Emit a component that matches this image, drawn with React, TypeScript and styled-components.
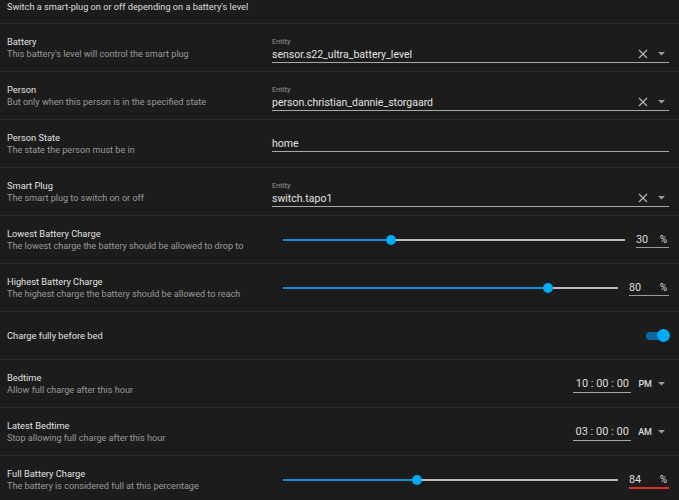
import React from "react";
import styled, { createGlobalStyle } from "styled-components";

const GlobalStyle = createGlobalStyle`
  html, body {
    margin: 0;
    padding: 0;
    background: #1c1c1c;
    font-family: Roboto, "Liberation Sans", sans-serif;
  }
`;

const Page = styled.div`
  width: 679px;
  height: 500px;
  overflow: hidden;
  background: #1c1c1c;
`;

const Header = styled.div`
  height: 23px;
  padding: 0 7px;
  font-size: 9.2px;
  line-height: 13px;
  color: #dcdcdc;
`;

const Row = styled.div`
  display: flex;
  align-items: stretch;
  height: 47px;
  border-top: 1px solid #2d2d2d;
  box-sizing: content-box;
`;

const Info = styled.div`
  width: 265px;
  padding-left: 7px;
  display: flex;
  flex-direction: column;
  justify-content: center;
`;

const Title = styled.div`
  font-size: 9.3px;
  line-height: 13px;
  color: #e1e1e1;
`;

const Desc = styled.div`
  font-size: 9.1px;
  line-height: 13px;
  color: #9a9a9a;
`;

const Control = styled.div<{ $align?: string }>`
  flex: 1;
  padding-right: 10px;
  display: flex;
  align-items: center;
  justify-content: ${(p) => p.$align || "stretch"};
`;

const Field = styled.div<{ $top: number }>`
  flex: 1;
  align-self: flex-start;
  margin-top: ${(p) => p.$top}px;
  display: flex;
  flex-direction: column;
`;

const FieldLabel = styled.div`
  font-size: 7.4px;
  line-height: 9px;
  color: #969696;
`;

const FieldLine = styled.div`
  display: flex;
  align-items: center;
  height: 16px;
  border-bottom: 1px solid #a8a8a8;
`;

const FieldValue = styled.div`
  flex: 1;
  font-size: 10.5px;
  color: #e2e2e2;
`;

const IconBox = styled.div`
  display: flex;
  align-items: center;
  gap: 10px;
  padding-right: 4px;
`;

const Slider = styled.div`
  flex: 1;
  position: relative;
  height: 10px;
  margin: 0 11px;
`;

const TrackRest = styled.div`
  position: absolute;
  left: 0;
  right: 0;
  top: 4px;
  height: 2px;
  background: #bdbdbd;
`;

const TrackFill = styled.div`
  position: absolute;
  left: 0;
  top: 4px;
  height: 2px;
  background: #1c8bd0;
`;

const Thumb = styled.div`
  position: absolute;
  top: 0;
  width: 10px;
  height: 10px;
  margin-left: -5px;
  border-radius: 50%;
  background: #03a9f4;
`;

const NumBox = styled.div<{ $w: number; $error?: boolean }>`
  width: ${(p) => p.$w}px;
  display: flex;
  justify-content: space-between;
  align-items: center;
  height: 15px;
  margin-top: 1px;
  font-size: 10.8px;
  color: #dcdcdc;
  border-bottom: ${(p) => (p.$error ? "2px solid #d4312c" : "1px solid #9a9a9a")};
`;

const Pct = styled.span`
  font-size: 10px;
  padding-right: 2px;
`;

const Switch = styled.div`
  position: relative;
  width: 23px;
  height: 8px;
  border-radius: 4px;
  background: #0b6aa0;
`;

const SwitchKnob = styled.div`
  position: absolute;
  right: -1px;
  top: -2.5px;
  width: 13px;
  height: 13px;
  border-radius: 50%;
  background: #03a9f4;
`;

const TimeWrap = styled.div`
  display: flex;
  align-items: center;
  margin-top: 1px;
`;

const TimeBox = styled.div`
  width: 58px;
  display: flex;
  justify-content: center;
  height: 16px;
  align-items: center;
  font-size: 11px;
  color: #dcdcdc;
  border-bottom: 1px solid #a8a8a8;
`;

const AmPm = styled.div`
  display: flex;
  align-items: center;
  gap: 6px;
  margin-left: 7px;
  font-size: 9px;
  font-weight: 500;
  color: #dcdcdc;
  padding-right: 4px;
`;

const Clear = () => (
  <svg width="10" height="10" viewBox="0 0 10 10">
    <path d="M1 1 L9 9 M9 1 L1 9" stroke="#b4b4b4" strokeWidth="1.2" fill="none" />
  </svg>
);

const Caret = () => (
  <svg width="7" height="4" viewBox="0 0 7 4">
    <path d="M0 0 L7 0 L3.5 3.5 Z" fill="#9c9c9c" />
  </svg>
);

type EntityProps = { value: string };
const EntityField = ({ value }: EntityProps) => (
  <Field $top={13}>
    <FieldLabel>Entity</FieldLabel>
    <FieldLine>
      <FieldValue>{value}</FieldValue>
      <IconBox>
        <Clear />
        <Caret />
      </IconBox>
    </FieldLine>
  </Field>
);

type SliderProps = { pos: number; value: number; w: number; error?: boolean };
const SliderControl = ({ pos, value, w, error }: SliderProps) => (
  <Control>
    <Slider>
      <TrackRest />
      <TrackFill style={{ width: `${pos}%` }} />
      <Thumb style={{ left: `${pos}%` }} />
    </Slider>
    <NumBox $w={w} $error={error}>
      <span>{value}</span>
      <Pct>%</Pct>
    </NumBox>
  </Control>
);

const TimeControl = ({ time, ampm }: { time: string; ampm: string }) => (
  <Control $align="flex-end">
    <TimeWrap>
      <TimeBox>{time}</TimeBox>
      <AmPm>
        {ampm}
        <Caret />
      </AmPm>
    </TimeWrap>
  </Control>
);

const Label = ({ title, desc }: { title: string; desc?: string }) => (
  <Info>
    <Title>{title}</Title>
    {desc && <Desc>{desc}</Desc>}
  </Info>
);

export default function App() {
  return (
    <Page>
      <GlobalStyle />
      <Header>Switch a smart-plug on or off depending on a battery's level</Header>

      <Row>
        <Label title="Battery" desc="This battery's level will control the smart plug" />
        <Control>
          <EntityField value="sensor.s22_ultra_battery_level" />
        </Control>
      </Row>

      <Row>
        <Label title="Person" desc="But only when this person is in the specified state" />
        <Control>
          <EntityField value="person.christian_dannie_storgaard" />
        </Control>
      </Row>

      <Row>
        <Label title="Person State" desc="The state the person must be in" />
        <Control>
          <Field $top={15}>
            <FieldLine>
              <FieldValue>home</FieldValue>
            </FieldLine>
          </Field>
        </Control>
      </Row>

      <Row>
        <Label title="Smart Plug" desc="The smart plug to switch on or off" />
        <Control>
          <EntityField value="switch.tapo1" />
        </Control>
      </Row>

      <Row>
        <Label title="Lowest Battery Charge" desc="The lowest charge the battery should be allowed to drop to" />
        <SliderControl pos={31.5} value={30} w={33} />
      </Row>

      <Row>
        <Label title="Highest Battery Charge" desc="The highest charge the battery should be allowed to reach" />
        <SliderControl pos={79} value={80} w={40} />
      </Row>

      <Row>
        <Label title="Charge fully before bed" />
        <Control $align="flex-end">
          <Switch>
            <SwitchKnob />
          </Switch>
        </Control>
      </Row>

      <Row>
        <Label title="Bedtime" desc="Allow full charge after this hour" />
        <TimeControl time="10 : 00 : 00" ampm="PM" />
      </Row>

      <Row>
        <Label title="Latest Bedtime" desc="Stop allowing full charge after this hour" />
        <TimeControl time="03 : 00 : 00" ampm="AM" />
      </Row>

      <Row>
        <Label title="Full Battery Charge" desc="The battery is considered full at this percentage" />
        <SliderControl pos={40} value={84} w={40} error />
      </Row>
    </Page>
  );
}
